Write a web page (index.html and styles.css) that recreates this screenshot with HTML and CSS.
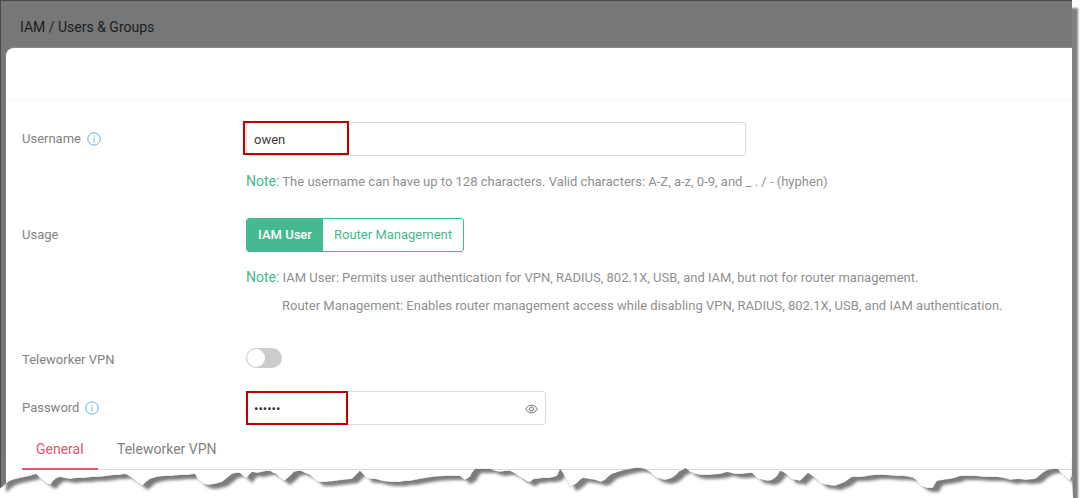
FILE: index.html
```html
<!DOCTYPE html>
<html lang="en">
<head>
<meta charset="utf-8">
<title>IAM / Users &amp; Groups</title>
<link rel="stylesheet" href="styles.css">
</head>
<body>
<div class="shot">
  <div class="window">
    <header class="crumb">IAM / Users &amp; Groups</header>
    <main class="panel">
      <div class="panel-head"></div>
      <form class="form">
        <div class="row row-user">
          <div class="label">Username
            <svg class="info" viewBox="0 0 14 14"><circle cx="7" cy="7" r="6.200"/><path d="M7 6v4.400M7 3.600v1.200"/></svg>
          </div>
          <div class="field">
            <div class="input input-wide"><span class="value">owen</span><i class="mark mark-user"></i></div>
            <p class="note note-first"><b>Note:</b> The username can have up to 128 characters. Valid characters: A-Z, a-z, 0-9, and _ . / - (hyphen)</p>
          </div>
        </div>
        <div class="row row-usage">
          <div class="label">Usage</div>
          <div class="field">
            <div class="seg"><span class="seg-on">IAM User</span><span class="seg-off">Router Management</span></div>
            <p class="note note-usage"><b>Note:</b> IAM User: Permits user authentication for VPN, RADIUS, 802.1X, USB, and IAM, but not for router management.</p>
            <p class="note note-indent">Router Management: Enables router management access while disabling VPN, RADIUS, 802.1X, USB, and IAM authentication.</p>
          </div>
        </div>
        <div class="row row-tele">
          <div class="label">Teleworker VPN</div>
          <div class="field"><div class="toggle"><i></i></div></div>
        </div>
        <div class="row row-pass">
          <div class="label">Password
            <svg class="info" viewBox="0 0 14 14"><circle cx="7" cy="7" r="6.200"/><path d="M7 6v4.400M7 3.600v1.200"/></svg>
          </div>
          <div class="field">
            <div class="input input-pass"><span class="dots">••••••</span>
              <svg class="eye" viewBox="0 0 14 10"><path d="M.7 5C2.4 2.2 4.500.8 7 .8s4.600 1.400 6.300 4.200C11.600 7.800 9.500 9.200 7 9.200S2.400 7.800.7 5z"/><circle cx="7" cy="5" r="2.200"/></svg>
              <i class="mark mark-pass"></i>
            </div>
          </div>
        </div>
        <nav class="tabs"><span class="tab tab-on">General</span><span class="tab">Teleworker VPN</span></nav>
      </form>
    </main>
  </div>
  <svg class="tear" viewBox="0 0 1080 40" width="1080" height="40" aria-hidden="true">
    <defs>
      <path id="tearline" d="M0 30 2 29 5 26 8 24 12 22 16 21 20 20 25 19 30 18 33 17 36 16 39 19 42 22 46 25 50 27 54 22 57 20 60 19 64 20 70 21 77 20 85 20 92 19 100 19 107 18 115 17 120 17 125 16 129 18 133 21 138 25 142 28 146 24 150 21 157 19 165 18 172 18 180 17 188 17 195 16 197 20 199 23 204 26 208 27 215 26 222 24 227 20 232 16 236 15 240 15 243 18 246 21 249 17 252 14 257 15 262 14 266 13 270 13 273 15 276 16 280 20 284 23 289 19 294 14 298 13 301 13 305 15 310 17 314 21 318 24 326 24 335 23 343 22 352 21 356 17 360 13 363 16 366 20 370 21 375 21 382 23 390 24 395 24 400 24 405 23 410 23 415 22 420 21 432 19 445 18 452 18 460 18 463 21 465 22 468 20 470 19 472 15 475 11 482 11 490 11 495 13 500 14 505 13 510 13 514 15 517 17 521 20 525 22 528 24 530 24 534 21 537 21 543 20 550 20 554 19 557 18 559 14 560 11 563 15 565 20 568 25 570 29 574 27 577 25 580 22 583 20 589 21 595 22 598 23 600 24 603 23 605 22 609 18 612 16 618 14 625 12 630 11 635 10 640 10 645 11 648 13 650 14 653 17 655 19 660 21 665 22 669 21 672 20 676 17 680 13 683 12 685 10 688 12 690 14 695 16 700 17 710 17 720 16 724 15 727 14 731 15 735 16 742 16 750 15 752 15 755 18 758 21 763 22 768 23 772 22 775 20 778 17 780 13 783 14 786 16 788 18 790 21 794 22 797 22 800 23 804 19 808 15 811 17 815 20 818 23 822 26 828 27 835 28 840 26 845 24 849 21 852 19 857 19 862 19 868 18 875 17 885 17 895 18 903 18 910 19 913 20 916 22 918 25 920 27 923 29 927 30 933 30 935 26 937 23 943 22 950 21 955 20 960 18 967 18 975 18 983 19 990 19 997 19 1003 20 1007 21 1010 22 1018 21 1026 22 1035 21 1038 19 1040 17 1044 14 1048 12 1053 11 1058 11 1060 14 1063 17 1066 20 1068 22 1070 22 1071 20 1072 18 1073 40 0 40Z"/>
      <clipPath id="below"><use href="#tearline"/></clipPath>
      <filter id="soft" x="-5%" y="-100%" width="110%" height="300%"><feGaussianBlur stdDeviation="1.700"/></filter>
      <path id="upper" d="M0 30 2 29 5 26 8 24 12 22 16 21 20 20 25 19 30 18 33 17 36 16 39 19 42 22 46 25 50 27 54 22 57 20 60 19 64 20 70 21 77 20 85 20 92 19 100 19 107 18 115 17 120 17 125 16 129 18 133 21 138 25 142 28 146 24 150 21 157 19 165 18 172 18 180 17 188 17 195 16 197 20 199 23 204 26 208 27 215 26 222 24 227 20 232 16 236 15 240 15 243 18 246 21 249 17 252 14 257 15 262 14 266 13 270 13 273 15 276 16 280 20 284 23 289 19 294 14 298 13 301 13 305 15 310 17 314 21 318 24 326 24 335 23 343 22 352 21 356 17 360 13 363 16 366 20 370 21 375 21 382 23 390 24 395 24 400 24 405 23 410 23 415 22 420 21 432 19 445 18 452 18 460 18 463 21 465 22 468 20 470 19 472 15 475 11 482 11 490 11 495 13 500 14 505 13 510 13 514 15 517 17 521 20 525 22 528 24 530 24 534 21 537 21 543 20 550 20 554 19 557 18 559 14 560 11 563 15 565 20 568 25 570 29 574 27 577 25 580 22 583 20 589 21 595 22 598 23 600 24 603 23 605 22 609 18 612 16 618 14 625 12 630 11 635 10 640 10 645 11 648 13 650 14 653 17 655 19 660 21 665 22 669 21 672 20 676 17 680 13 683 12 685 10 688 12 690 14 695 16 700 17 710 17 720 16 724 15 727 14 731 15 735 16 742 16 750 15 752 15 755 18 758 21 763 22 768 23 772 22 775 20 778 17 780 13 783 14 786 16 788 18 790 21 794 22 797 22 800 23 804 19 808 15 811 17 815 20 818 23 822 26 828 27 835 28 840 26 845 24 849 21 852 19 857 19 862 19 868 18 875 17 885 17 895 18 903 18 910 19 913 20 916 22 918 25 920 27 923 29 927 30 933 30 935 26 937 23 943 22 950 21 955 20 960 18 967 18 975 18 983 19 990 19 997 19 1003 20 1007 21 1010 22 1018 21 1026 22 1035 21 1038 19 1040 17 1044 14 1048 12 1053 11 1058 11 1060 14 1063 17 1066 20 1068 22 1070 22 1071 20 1072 18 1072 -10 0 -10Z"/>
    </defs>
    <use class="tear-white" href="#tearline"/>
    <g clip-path="url(#below)">
      <use class="tear-shadow" href="#upper" x="6" y="4" filter="url(#soft)"/>
    </g>
    <use class="tear-edge" href="#upper"/>
  </svg>
</div>
</body>
</html>
```

FILE: styles.css
```css
* { box-sizing: border-box; }
html, body { margin: 0; padding: 0; background: #fff; }
body { font-family: Roboto, "Liberation Sans", sans-serif; color: #8a8a8a; }

.shot { position: relative; width: 1080px; height: 498px; overflow: hidden; background: #fff; }

.window {
  width: 1072px;
  height: 498px;
  margin-top: 1px;
  background: #767778;
  border-left: 1px solid #4a4a4a;
  box-shadow: 0 -1px 0 #48494a, 6px 7px 2px #808080;
  display: flex;
  flex-direction: column;
}
.crumb {
  height: 47px;
  padding: 17px 0 0 19px;
  font-size: 14px;
  line-height: 18px;
  color: #1c1d1e;
}
.panel {
  flex: 1;
  margin-left: 5px;
  background: #fff;
  border-top-left-radius: 8px;
  box-shadow: 0 -1px 2px #8f8f8f;
}
.panel-head { height: 53px; border-bottom: 1px solid #f6f6f6; }
.form { padding: 21px 0 0 16px; }

.row { display: flex; }
.label {
  flex: 0 0 224px;
  display: flex;
  align-items: center;
  gap: 6px;
  height: 34px;
  padding-bottom: 2px;
  font-size: 13px;
  color: #828282;
}
.info { width: 14px; height: 14px; margin-top: 2px; fill: none; stroke: #5ab0ee; stroke-width: 1; }
.field { flex: 1; }

.input {
  position: relative;
  height: 34px;
  display: flex;
  align-items: center;
  padding-left: 7px;
  border: 1px solid #d9d9d9;
  border-radius: 3px;
  background: #fff;
}
.input-wide { width: 500px; }
.input-pass { width: 300px; }
.value { font-size: 13px; color: #3c3c3c; }
.dots { font-size: 13px; color: #333; }
.mark { position: absolute; border: 2px solid #c00000; pointer-events: none; }
.mark-user { left: -4px; top: -2px; width: 106px; height: 34px; }
.mark-pass { left: -1px; top: -1px; width: 102px; height: 34px; }
.eye { position: absolute; right: 7px; top: 12px; width: 13px; height: 10px; fill: none; stroke: #555; stroke-width: .9; }

.note { margin: 0; font-size: 13px; line-height: 18px; color: #909090; }
.note b { font-weight: 400; font-size: 14px; color: #45b98f; }
.note-first { margin-top: 16px; }
.note-usage { margin-top: 16px; }
.note-indent { margin-top: 10px; padding-left: 36px; }

.row-usage { margin-top: 27px; }
.row-tele { margin-top: 28px; height: 34px; }
.row-pass { margin-top: 14px; }

.seg {
  display: inline-flex;
  height: 34px;
  border: 1px solid #45b98f;
  border-radius: 3px;
  overflow: hidden;
  font-size: 13px;
  line-height: 32px;
}
.seg-on { width: 76px; text-align: center; background: #45b98f; color: #fff; font-weight: 500; }
.seg-off { width: 140px; text-align: center; color: #45b98f; }

.toggle {
  position: relative;
  width: 36px;
  height: 20px;
  margin-top: 5px;
  border-radius: 10px;
  background: #cccccc;
}
.toggle i {
  position: absolute;
  left: 1px;
  top: 1px;
  width: 18px;
  height: 18px;
  border-radius: 50%;
  background: #fff;
}

.tabs {
  display: flex;
  height: 35px;
  margin-top: 10px;
  border-bottom: 1px solid #dcdcdc;
  font-size: 14px;
  color: #828282;
}
.tab { padding: 5px 14px 0; line-height: 18px; height: 35px; }
.tab:last-child { margin-left: 5px; }
.tab-on { color: #e8546f; border-bottom: 2px solid #e8546f; width: 76px; }

.tear { position: absolute; left: 0; bottom: 0; }
.tear-white { fill: #fff; }
.tear-shadow { fill: #7c7c7c; }
.tear-edge { fill: none; stroke: #666; stroke-width: .4; stroke-dasharray: 1.500 1; }
```
